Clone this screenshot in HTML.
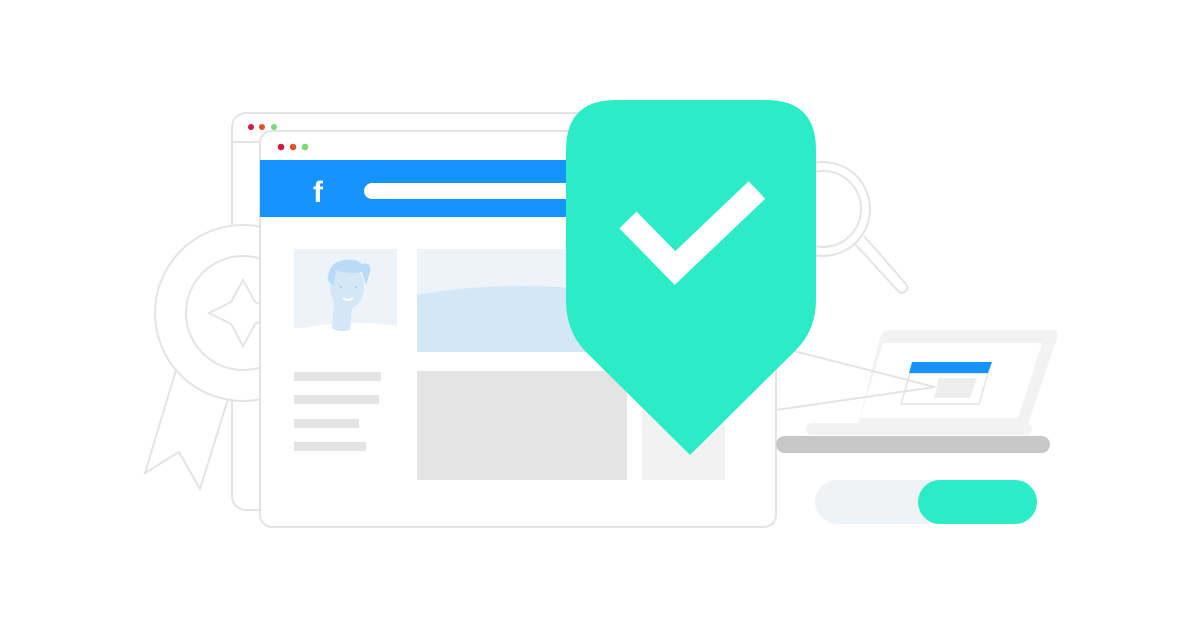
<!DOCTYPE html><html><head><style>body{margin:0;background:#fff}svg{display:block}</style></head><body>
<svg width="1200" height="628" viewBox="0 0 1200 628" xmlns="http://www.w3.org/2000/svg">
<rect x="232" y="113" width="380" height="397" rx="14" fill="#fff" stroke="#e4e4e4" stroke-width="2"/>
<line x1="232" y1="142" x2="612" y2="142" stroke="#e4e4e4" stroke-width="2"/>
<circle cx="251" cy="127" r="3" fill="#d01c3f"/><circle cx="262" cy="127" r="3" fill="#d9542a"/><circle cx="274" cy="127" r="3" fill="#7ed67d"/>
<g fill="#fff" stroke="#e4e4e4" stroke-width="2">
<path d="M176 370 L145 473 L179 452 L200 489 L228 399"/>
<circle cx="243" cy="313" r="88"/><circle cx="243" cy="313" r="57"/>
<path d="M243 280 L255 302 L277 313 L255 324 L243 346 L231 324 L209 313 L231 302 Z"/>
</g>
<g fill="none" stroke="#e4e4e4" stroke-width="2">
<circle cx="823" cy="209" r="47"/><circle cx="823" cy="209" r="38"/>
<path d="M855 244 L898 291 A5 5 0 0 0 906 284 L864 236"/>
</g>
<rect x="260" y="131" width="516" height="396" rx="12" fill="#fff" stroke="#e4e4e4" stroke-width="2"/>
<circle cx="281" cy="147" r="3.3" fill="#d01c3f"/><circle cx="293" cy="147" r="3.3" fill="#d9542a"/><circle cx="305" cy="147" r="3.3" fill="#7ed67d"/>
<rect x="260" y="160" width="400" height="57" fill="#1694fe"/>
<rect x="364" y="183" width="210" height="16" rx="8" fill="#fff"/>
<text x="318" y="202" font-family="Liberation Sans,sans-serif" font-weight="bold" font-size="30" fill="#fff" text-anchor="middle">f</text>
<rect x="294" y="249" width="103" height="79" fill="#edf4f9"/>
<path d="M294 330 Q345 318 397 326 L397 340 L294 340Z" fill="#fff"/>
<path d="M334 302 L332 328 Q338 333 350 330 L352 306 Z" fill="#d3e7f7"/>
<ellipse cx="347" cy="287" rx="17" ry="22" fill="#d3e7f7"/>
<path d="M328 276 Q330 262 344 260 Q356 258 362 264 Q372 262 370 272 L366 285 L362 272 Q350 275 336 270 L334 285 Q326 282 328 276Z" fill="#b9dbf7"/>
<circle cx="341" cy="287" r="1" fill="#9cc"/><circle cx="356" cy="287" r="1" fill="#9cc"/>
<path d="M343 298 Q348 302 353 298" stroke="#fff" stroke-width="2" fill="none"/>
<rect x="417" y="249" width="180" height="103" fill="#edf4f9"/>
<path d="M417 295 Q500 280 597 290 L597 352 L417 352Z" fill="#d3e7f7"/>
<g fill="#e4e4e4"><rect x="294" y="372" width="87" height="9"/><rect x="294" y="395" width="85" height="9"/><rect x="294" y="419" width="65" height="9"/><rect x="294" y="442" width="72" height="9"/></g>
<rect x="417" y="371" width="210" height="109" fill="#e4e4e4"/>
<rect x="642" y="380" width="83" height="100" fill="#f2f2f2"/>
<path d="M856 433 L880 338 Q882 330 890 330 L1052 330 Q1060 330 1057 338 L1028 424 Q1025 432 1016 432 Z" fill="#f2f2f2"/>
<rect x="806" y="423" width="226" height="12" rx="6" fill="#f2f2f2"/>
<path d="M883 343 L1042 343 L1018 418 L860 418Z" fill="#fff"/>
<rect x="776" y="436" width="274" height="17" rx="8.5" fill="#c8c8c8"/>
<path d="M910 373 L988 373 L979 404 L901 404Z" fill="#fff" stroke="#e4e4e4" stroke-width="1.5"/>
<path d="M912 362 L992 362 L988 373 L909 373Z" fill="#1694fe"/>
<path d="M939 378 L977 378 L970 398 L934 398Z" fill="#eee"/>
<path d="M790 350 L935 387 L776 410" fill="none" stroke="#e4e4e4" stroke-width="2"/>
<path d="M566 150 Q566 100 616 100 L766 100 Q816 100 816 150 L816 300 Q816 330 796 350 L690 455 L584 350 Q566 330 566 300 Z" fill="#2cecc7"/>
<path d="M628 220 L675 268 L757 190" fill="none" stroke="#fff" stroke-width="24"/>
<rect x="815" y="480" width="220" height="44" rx="22" fill="#eff3f6"/>
<rect x="918" y="480" width="119" height="44" rx="22" fill="#2cecc7"/>
</svg></body></html>
